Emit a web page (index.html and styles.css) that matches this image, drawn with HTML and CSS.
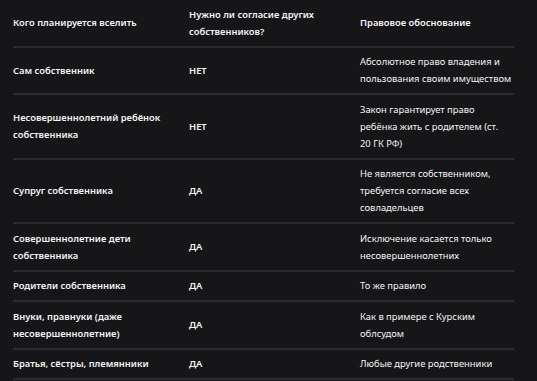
FILE: index.html
```html
<!DOCTYPE html>
<html lang="ru">
<head>
<meta charset="utf-8">
<link rel="stylesheet" href="styles.css">
</head>
<body>
<div class="wrap">
<table class="tbl">
  <thead>
    <tr>
      <th class="c1">Кого планируется вселить</th>
      <th class="c2">Нужно ли согласие других собственников?</th>
      <th class="c3">Правовое обоснование</th>
    </tr>
  </thead>
  <tbody>
    <tr><td class="c1">Сам собственник</td><td class="c2">НЕТ</td><td class="c3">Абсолютное право владения и пользования своим имуществом</td></tr>
    <tr><td class="c1">Несовершеннолетний ребёнок собственника</td><td class="c2">НЕТ</td><td class="c3">Закон гарантирует право ребёнка жить с родителем (ст. <span class="nb">20 ГК РФ)</span></td></tr>
    <tr><td class="c1">Супруг собственника</td><td class="c2">ДА</td><td class="c3">Не является собственником, требуется согласие всех совладельцев</td></tr>
    <tr><td class="c1">Совершеннолетние дети собственника</td><td class="c2">ДА</td><td class="c3">Исключение касается только несовершеннолетних</td></tr>
    <tr><td class="c1">Родители собственника</td><td class="c2">ДА</td><td class="c3">То же правило</td></tr>
    <tr><td class="c1">Внуки, правнуки (даже несовершеннолетние)</td><td class="c2">ДА</td><td class="c3">Как в примере с Курским облсудом</td></tr>
    <tr><td class="c1">Братья, сёстры, племянники</td><td class="c2">ДА</td><td class="c3">Любые другие родственники</td></tr>
  </tbody>
</table>
</div>
</body>
</html>
```

FILE: styles.css
```css
html, body {
  margin: 0;
  padding: 0;
  background: #161618;
}
.wrap {
  padding: 0 23px 0 13px;
}
.tbl {
  width: 501px;
  border-collapse: collapse;
  table-layout: fixed;
  font-family: "Noto Sans", "Open Sans", sans-serif;
  font-size: 9.4px;
  line-height: 17px;
  color: #f4f4f4;
}
.tbl th, .tbl td {
  box-sizing: border-box;
  text-align: left;
  vertical-align: middle;
  padding: 5.75px 8px 5.75px 0;
  border-bottom: 2px solid #2c2c2e;
  font-weight: 600;
}
.tbl .c1 { width: 176px; }
.tbl .c2 { width: 171px; }
.tbl .c3 { width: 154px; padding-right: 0; }
.tbl td.c3 { font-weight: 400; }
.tbl th.c3 { font-weight: 600; }
.tbl .nb { white-space: nowrap; }
```
